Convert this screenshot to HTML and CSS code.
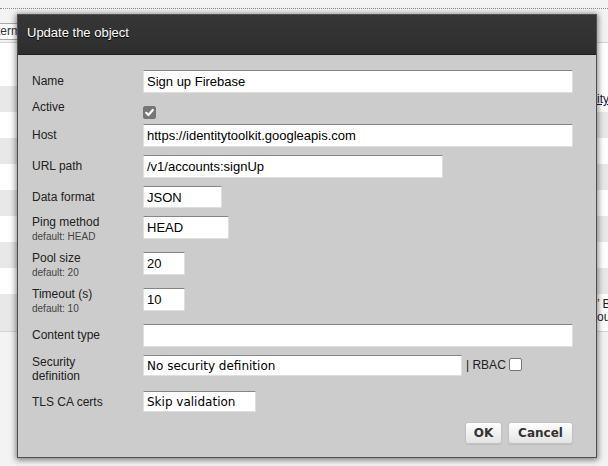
FILE: index.html
```html
<!DOCTYPE html>
<html>
<head>
<meta charset="utf-8">
<link rel="stylesheet" href="styles.css">
</head>
<body>
<div class="page">
  <div class="topbar"></div>
  <div class="toolbar"><div class="search">term</div></div>
  <div class="table">
    <div class="lead"></div>
    <div class="rows">
      <div class="row"><div class="c1"></div><div class="c2"><span class="link">ity</span></div></div>
      <div class="row"><div class="c1"></div><div class="c2"></div></div>
      <div class="row"><div class="c1"></div><div class="c2"></div></div>
      <div class="row"><div class="c1"></div><div class="c2"></div></div>
      <div class="row"><div class="c1"></div><div class="c2"></div></div>
      <div class="row"><div class="c1"></div><div class="c2"></div></div>
      <div class="row"><div class="c1"></div><div class="c2"></div></div>
      <div class="row"><div class="c1"></div><div class="c2"></div></div>
      <div class="row tall"><div class="c1"></div><div class="c2 multi">’ B<br>oul</div></div>
    </div>
  </div>
</div>

<div class="dialog">
  <div class="dialog-head">Update the object</div>
  <div class="dialog-body">
    <div class="form">
      <label class="lbl">Name</label>
      <input class="field w-full" type="text" value="Sign up Firebase">

      <label class="lbl short">Active</label>
      <div class="check-cell">
        <span class="check on"><svg width="13" height="13" viewBox="0 0 13 13"><path d="M3.2 6.8 L5.4 9 L9.8 4" fill="none" stroke="#fff" stroke-width="2.2" stroke-linecap="round" stroke-linejoin="round"/></svg></span>
      </div>

      <label class="lbl">Host</label>
      <input class="field w-full" type="text" value="https://identitytoolkit.googleapis.com">

      <label class="lbl">URL path</label>
      <input class="field w-url" type="text" value="/v1/accounts:signUp">

      <label class="lbl">Data format</label>
      <input class="field w-data" type="text" value="JSON">

      <label class="lbl two">Ping method<small>default: HEAD</small></label>
      <input class="field w-ping" type="text" value="HEAD">

      <label class="lbl two">Pool size<small>default: 20</small></label>
      <input class="field w-num" type="text" value="20">

      <label class="lbl two">Timeout (s)<small>default: 10</small></label>
      <input class="field w-num" type="text" value="10">

      <label class="lbl">Content type</label>
      <input class="field w-full" type="text" value="">

      <label class="lbl pair">Security<br>definition</label>
      <div class="sec-cell">
        <input class="field alt w-sec" type="text" value="No security definition">
        <span class="rbac">| RBAC</span>
        <span class="check"></span>
      </div>

      <label class="lbl">TLS CA certs</label>
      <input class="field alt w-tls" type="text" value="Skip validation">
    </div>
    <div class="actions">
      <button class="btn">OK</button>
      <button class="btn">Cancel</button>
    </div>
  </div>
</div>
</body>
</html>
```

FILE: styles.css
```css
html, body {
  margin: 0;
  padding: 0;
}
body {
  width: 608px;
  height: 466px;
  overflow: hidden;
  background: #f3f3f3;
  font-family: "Liberation Sans", Arial, sans-serif;
  position: relative;
}

/* background page */
.topbar {
  height: 8px;
  border-bottom: 1px dotted #8a8a8a;
}
.toolbar {
  height: 34px;
  box-sizing: border-box;
  padding-top: 14px;
  border-bottom: 1px solid #d2d2d2;
}
.search {
  width: 80px;
  height: 17px;
  box-sizing: border-box;
  margin-left: -6px;
  padding-left: 2px;
  background: #fff;
  border: 1px solid #a9a9a9;
  font-size: 12px;
  line-height: 15px;
  color: #333;
}
.table {
  background: #fff;
  border-bottom: 1px solid #d2d2d2;
}
.lead {
  height: 43px;
}
.row {
  display: flex;
  height: 26px;
}
.row.tall {
  height: 37px;
}
.c1 {
  flex: 1;
}
.c2 {
  width: 11px;
  padding-left: 3px;
  font-size: 12px;
  line-height: 26px;
  color: #222;
  white-space: nowrap;
  overflow: hidden;
}
.c2.multi {
  line-height: 13px;
  padding-top: 4px;
  box-sizing: border-box;
  width: 14px;
}
.row:nth-child(odd) .c1,
.row:nth-child(even) .c2 {
  background: #e8e8e8;
}
.link {
  text-decoration: underline;
  color: #1a1a3a;
}

/* dialog */
.dialog {
  position: absolute;
  left: 17px;
  top: 14px;
  width: 580px;
  height: 444px;
  box-sizing: border-box;
  border: 1px solid #505050;
  background: #cccccc;
  box-shadow: 0 1px 6px 1px rgba(0, 0, 0, 0.5);
  display: flex;
  flex-direction: column;
}
.dialog-head {
  height: 40px;
  box-sizing: border-box;
  padding: 0 9px 4px;
  line-height: 36px;
  background: linear-gradient(#363636, #2e2e2e);
  border-bottom: 1px solid #1f1f1f;
  color: #fff;
  font-size: 13px;
  text-shadow: 0 1px 1px #000;
}
.dialog-body {
  flex: 1;
  padding: 15px 23px 0 14px;
}
.form {
  display: grid;
  grid-template-columns: 111px 430px;
  row-gap: 8px;
  align-items: start;
}
.lbl {
  font-size: 12px;
  line-height: 22px;
  color: #222;
}
.lbl.short {
  line-height: 13px;
}
.lbl.two {
  line-height: 13px;
}
.lbl.two small {
  display: block;
  font-size: 10px;
  line-height: 15px;
  color: #444;
}
.lbl.pair {
  line-height: 14px;
}
.field {
  height: 22px;
  box-sizing: border-box;
  margin: 0;
  padding: 0 3px;
  border: 1px solid #dedede;
  border-top-color: #858585;
  background: #fff;
  font-family: "Liberation Sans", Arial, sans-serif;
  font-size: 13px;
  color: #000;
  outline: none;
}
.field.alt {
  font-family: "DejaVu Sans", Verdana, sans-serif;
  font-size: 12px;
  height: 21px;
}
.w-full { width: 430px; height: 23px; }
.w-url { width: 300px; height: 23px; }
.w-data { width: 79px; }
.w-ping { width: 86px; height: 23px; }
.w-num { width: 42px; height: 23px; }
.w-sec { width: 319px; }
.w-tls { width: 113px; }

.check-cell {
  height: 15px;
  padding-top: 2px;
  box-sizing: border-box;
}
.check {
  display: inline-block;
  width: 13px;
  height: 13px;
  box-sizing: border-box;
  border: 1px solid #767676;
  border-radius: 2px;
  background: #fff;
  vertical-align: middle;
}
.check.on {
  background: #767676;
  border-color: #767676;
  position: relative;
}
.check.on svg {
  position: absolute;
  left: -1px;
  top: -1px;
}
.sec-cell {
  display: flex;
  align-items: center;
  height: 28px;
  align-self: start;
}
.sec-cell .field {
  align-self: flex-start;
}
.rbac {
  font-size: 12px;
  color: #222;
  margin: 0 3px 0 4px;
  align-self: flex-start;
  line-height: 21px;
}
.sec-cell .check {
  align-self: flex-start;
  margin-top: 3px;
}

.actions {
  display: flex;
  justify-content: flex-end;
  gap: 6px;
  margin-top: 9px;
}
.btn {
  height: 22px;
  padding: 0;
  box-sizing: border-box;
  border: 1px solid #c2c2c2;
  border-radius: 3px;
  background: linear-gradient(#ffffff, #e3e3e3);
  box-shadow: 0 1px 1px rgba(0, 0, 0, 0.08);
  font-family: "DejaVu Sans", Verdana, sans-serif;
  font-weight: bold;
  font-size: 12px;
  color: #333;
}
.btn:first-child { width: 37px; }
.btn:last-child { width: 65px; }
```
